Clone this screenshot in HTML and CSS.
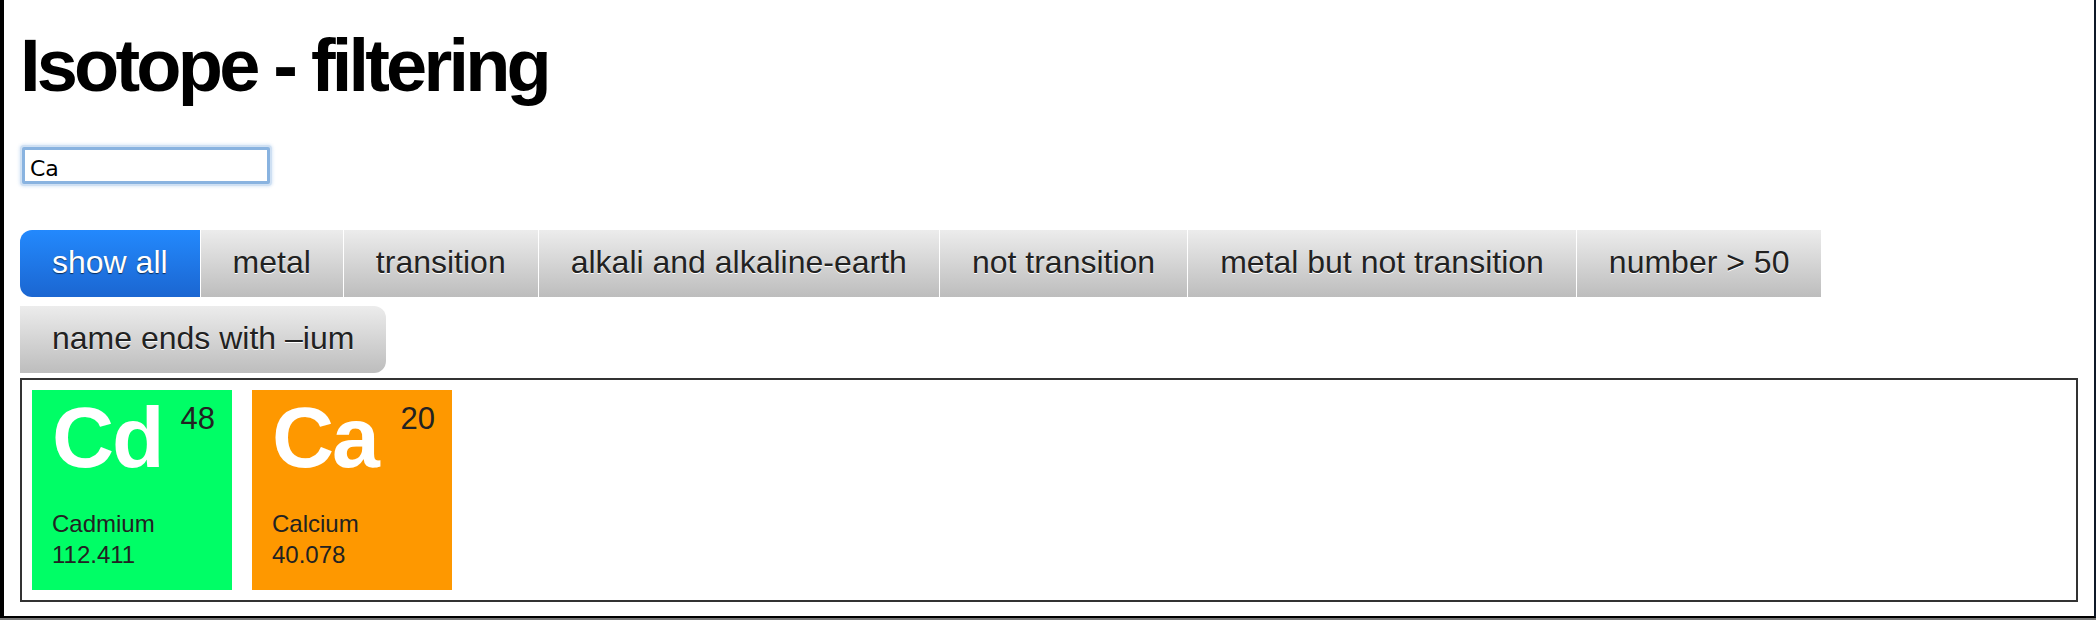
FILE: index.html
```html
<!DOCTYPE html>
<html>
<head>
<meta charset="utf-8">
<title>Isotope - filtering</title>
<link rel="stylesheet" href="styles.css">
</head>
<body>
<div class="window">
  <h1 class="title">Isotope - filtering</h1>
  <input class="search" type="text" value="Ca">
  <ul class="filters">
    <li><a class="filter selected first">show all</a></li>
    <li><a class="filter">metal</a></li>
    <li><a class="filter">transition</a></li>
    <li><a class="filter">alkali and alkaline-earth</a></li>
    <li><a class="filter">not transition</a></li>
    <li><a class="filter">metal but not transition</a></li>
    <li><a class="filter">number &gt; 50</a></li>
    <li><a class="filter last">name ends with –ium</a></li>
  </ul>
  <div class="container">
    <div class="element transition-metal">
      <div class="top">
        <span class="symbol">Cd</span>
        <span class="number">48</span>
      </div>
      <div class="name">Cadmium</div>
      <div class="weight">112.411</div>
    </div>
    <div class="element alkaline-earth">
      <div class="top">
        <span class="symbol">Ca</span>
        <span class="number">20</span>
      </div>
      <div class="name">Calcium</div>
      <div class="weight">40.078</div>
    </div>
  </div>
</div>
</body>
</html>
```
FILE: styles.css
```css
html, body {
  margin: 0;
  padding: 0;
}

body {
  background: #777;
  width: 2096px;
  height: 620px;
  overflow: hidden;
  font-family: "Liberation Sans", Arial, Helvetica, sans-serif;
  color: #000;
}

.window {
  box-sizing: border-box;
  height: 618px;
  background: #fff;
  border-left: 4px solid #000;
  border-right: 2px solid #0f1928;
  border-bottom: 2px solid #000;
  padding: 29px 16px 0 16px;
}

.title {
  margin: 0;
  font-size: 74px;
  line-height: 74px;
  font-weight: bold;
  letter-spacing: -3.8px;
}

.search {
  display: block;
  box-sizing: border-box;
  margin: 44px 0 0 2px;
  width: 248px;
  height: 37px;
  border: 3px solid #89b3e0;
  box-shadow: 0 0 0 2px #cfe0f3, 0 0 3px 3px rgba(160, 196, 235, 0.35);
  border-radius: 2px;
  padding: 5px 5px 0 5px;
  font-family: "DejaVu Sans", "Open Sans", sans-serif;
  font-size: 22px;
  line-height: 26px;
  color: #000;
  outline: none;
  background: #fff;
}

.filters {
  list-style: none;
  margin: 46px 0 0 0;
  padding: 0;
  display: flex;
  flex-wrap: wrap;
  column-gap: 1px;
  row-gap: 9px;
  width: 1900px;
}

.filters li {
  display: block;
}

.filter {
  display: block;
  font-size: 32px;
  line-height: 65px;
  padding: 0 32px 2px 32px;
  color: #222;
  text-shadow: 0 1px 0 #fff;
  background: linear-gradient(#ececec, #bdbdbd);
  white-space: nowrap;
}

.filter.selected {
  color: #fff;
  text-shadow: 0 1px 1px rgba(0, 0, 0, 0.6);
  background: linear-gradient(#2389fd, #1b66d1);
}

.filter.first {
  border-radius: 12px 0 0 12px;
}

.filter.last {
  border-radius: 0 12px 12px 0;
}

.container {
  margin-top: 5px;
  border: 2px solid #333;
  height: 220px;
  display: flex;
  padding: 0;
}

.element {
  box-sizing: border-box;
  width: 200px;
  height: 200px;
  margin: 10px;
  padding: 4px 17px 0 20px;
  color: #222;
}

.transition-metal {
  background: #00fe66;
}

.alkaline-earth {
  background: #fe9800;
}

.top {
  display: flex;
  justify-content: space-between;
  align-items: flex-start;
  height: 86px;
}

.symbol {
  font-size: 86px;
  line-height: 86px;
  font-weight: bold;
  color: #fff;
  letter-spacing: -2px;
}

.number {
  font-size: 31px;
  line-height: 31px;
  margin-top: 9px;
}

.name {
  margin-top: 28px;
  font-size: 24px;
  line-height: 31px;
}

.weight {
  font-size: 24px;
  line-height: 31px;
}
```
